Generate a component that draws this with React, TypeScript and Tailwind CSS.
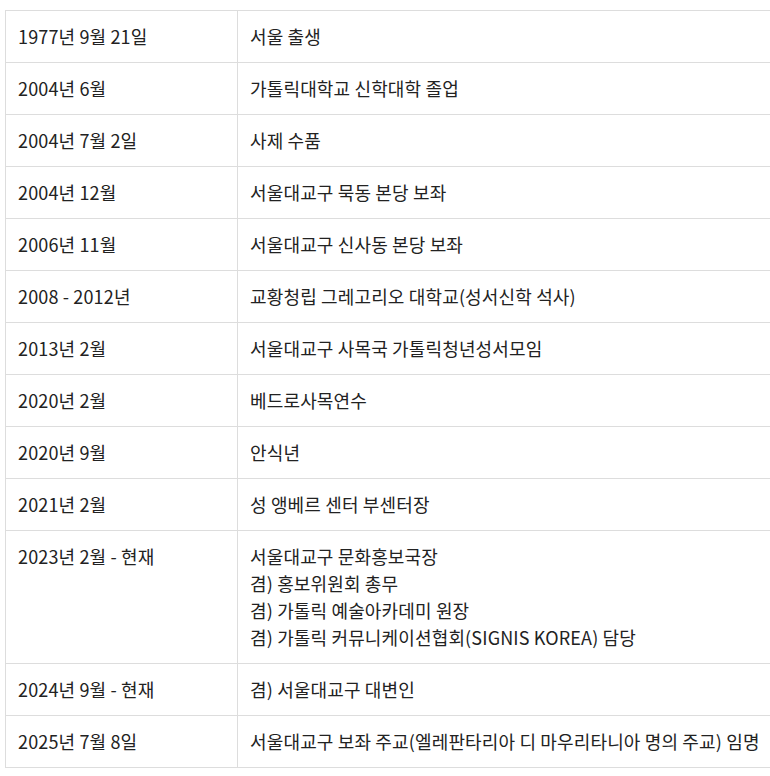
const rows: [string, string[]][] = [
  ['1977년 9월 21일', ['서울 출생']],
  ['2004년 6월', ['가톨릭대학교 신학대학 졸업']],
  ['2004년 7월 2일', ['사제 수품']],
  ['2004년 12월', ['서울대교구 묵동 본당 보좌']],
  ['2006년 11월', ['서울대교구 신사동 본당 보좌']],
  ['2008 - 2012년', ['교황청립 그레고리오 대학교(성서신학 석사)']],
  ['2013년 2월', ['서울대교구 사목국 가톨릭청년성서모임']],
  ['2020년 2월', ['베드로사목연수']],
  ['2020년 9월', ['안식년']],
  ['2021년 2월', ['성 앵베르 센터 부센터장']],
  [
    '2023년 2월 - 현재',
    [
      '서울대교구 문화홍보국장',
      '겸) 홍보위원회 총무',
      '겸) 가톨릭 예술아카데미 원장',
      '겸) 가톨릭 커뮤니케이션협회(SIGNIS KOREA) 담당',
    ],
  ],
  ['2024년 9월 - 현재', ['겸) 서울대교구 대변인']],
  ['2025년 7월 8일', ['서울대교구 보좌 주교(엘레판타리아 디 마우리타니아 명의 주교) 임명']],
];

export default function App() {
  return (
    <div className="w-[770px] h-[776px] overflow-hidden bg-white pt-[10px] pl-[5px] font-['Noto_Sans_CJK_KR','Noto_Sans',sans-serif] text-[18px] leading-[27px] tracking-[0.15px] text-[#222]">
      <table className="w-[800px] border-collapse">
        <tbody>
          {rows.map(([date, items]) => (
            <tr key={date}>
              <td className="w-[232px] border border-[#dddddd] px-3 py-3 align-top whitespace-nowrap">{date}</td>
              <td className="border border-[#dddddd] px-3 py-3 align-top whitespace-nowrap">
                {items.map((t) => (
                  <div key={t}>{t}</div>
                ))}
              </td>
            </tr>
          ))}
        </tbody>
      </table>
    </div>
  );
}
